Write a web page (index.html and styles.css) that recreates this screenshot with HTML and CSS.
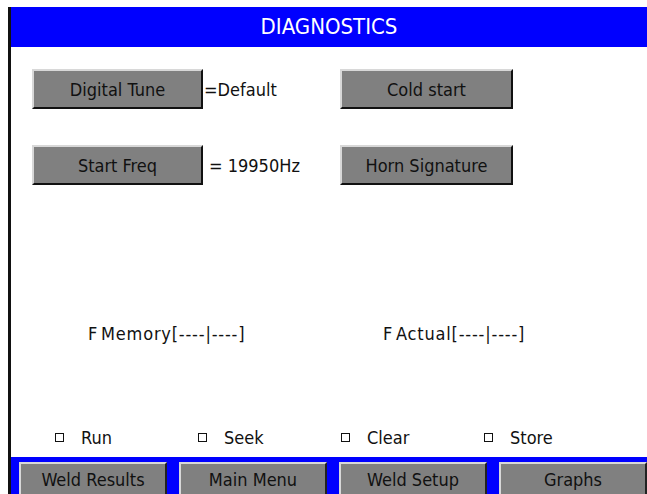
FILE: index.html
```html
<!DOCTYPE html>
<html lang="en">

<head>
    <meta charset="UTF-8">
    <meta name="viewport" content="width=device-width, initial-scale=1.0">
    <title>Diagnostics</title>
    <link rel="stylesheet" href="styles.css">
</head>

<body>

    <div class="screen">
        <div class="panel">
            <div class="header">DIAGNOSTICS</div>

            <div class="content">
                <div class="btn-row">
                    <button class="btn">Digital Tune</button>
                    <span class="value">=Default</span>
                    <button class="btn btn-wide">Cold start</button>
                </div>
                <div class="btn-row">
                    <button class="btn">Start Freq</button>
                    <span class="value value-pad">= 19950Hz</span>
                    <button class="btn btn-wide">Horn Signature</button>
                </div>

                <div class="freq-row">
                    <span class="freq freq-mem">F Memory[----|----]</span>
                    <span class="freq">F Actual[----|----]</span>
                </div>

                <div class="check-row">
                    <label class="check"><span class="box"></span>Run</label>
                    <label class="check"><span class="box"></span>Seek</label>
                    <label class="check"><span class="box"></span>Clear</label>
                    <label class="check"><span class="box"></span>Store</label>
                </div>
            </div>

            <div class="footer">
                <button class="nav-btn">Weld Results</button>
                <button class="nav-btn">Main Menu</button>
                <button class="nav-btn">Weld Setup</button>
                <button class="nav-btn">Graphs</button>
            </div>
        </div>
    </div>

</body>

</html>
```

FILE: styles.css
```css
body {
    margin: 0;
    background-color: white;
    font-family: "DejaVu Sans Condensed", "DejaVu Sans", sans-serif;
    color: #111;
    overflow: hidden;
}

.screen {
    padding: 7px 0 0 8px;
    height: 494px;
    box-sizing: border-box;
}

.panel {
    border-left: 3px solid #111;
    height: 487px;
    display: flex;
    flex-direction: column;
}

.header {
    background-color: #0000FF;
    color: white;
    height: 40px;
    line-height: 40px;
    text-align: center;
    font-size: 22px;
}

.content {
    flex: 1;
    padding: 22px 0 0 21px;
    display: flex;
    flex-direction: column;
}

.btn-row {
    display: flex;
    align-items: center;
    height: 40px;
    margin-bottom: 36px;
}

.btn {
    font-family: inherit;
    font-size: 18px;
    color: #111;
    background-color: #808080;
    border-style: solid;
    border-width: 2px;
    border-color: #d8d8d8 #111 #111 #d8d8d8;
    width: 171px;
    height: 40px;
    padding: 0;
}

.btn-wide {
    width: 173px;
}

.value {
    width: 136px;
    font-size: 18px;
    padding-left: 1px;
}

.value-pad {
    padding-left: 6px;
    width: 131px;
}

.freq-row {
    display: flex;
    margin-top: 102px;
    padding-left: 56px;
    font-size: 18px;
}

.freq {
    letter-spacing: 0.8px;
    word-spacing: -3px;
}

.freq-mem {
    width: 295px;
}

.check-row {
    display: flex;
    margin-top: 83px;
    padding-left: 23px;
    font-size: 18px;
}

.check {
    display: flex;
    align-items: center;
    width: 143px;
}

.box {
    width: 7px;
    height: 7px;
    border: 1px solid #111;
    margin-right: 17px;
}

.footer {
    background-color: #0000FF;
    height: 37px;
    padding: 5px 0 0 8px;
    box-sizing: border-box;
    display: grid;
    grid-template-columns: repeat(4, 1fr);
    gap: 12px;
    overflow: hidden;
}

.nav-btn {
    font-family: inherit;
    font-size: 18px;
    color: #111;
    background-color: #808080;
    border-style: solid;
    border-width: 2px 2px 0 2px;
    border-color: #d8d8d8 #222 #222 #d8d8d8;
    height: 34px;
    padding: 0 0 2px 0;
}
```
